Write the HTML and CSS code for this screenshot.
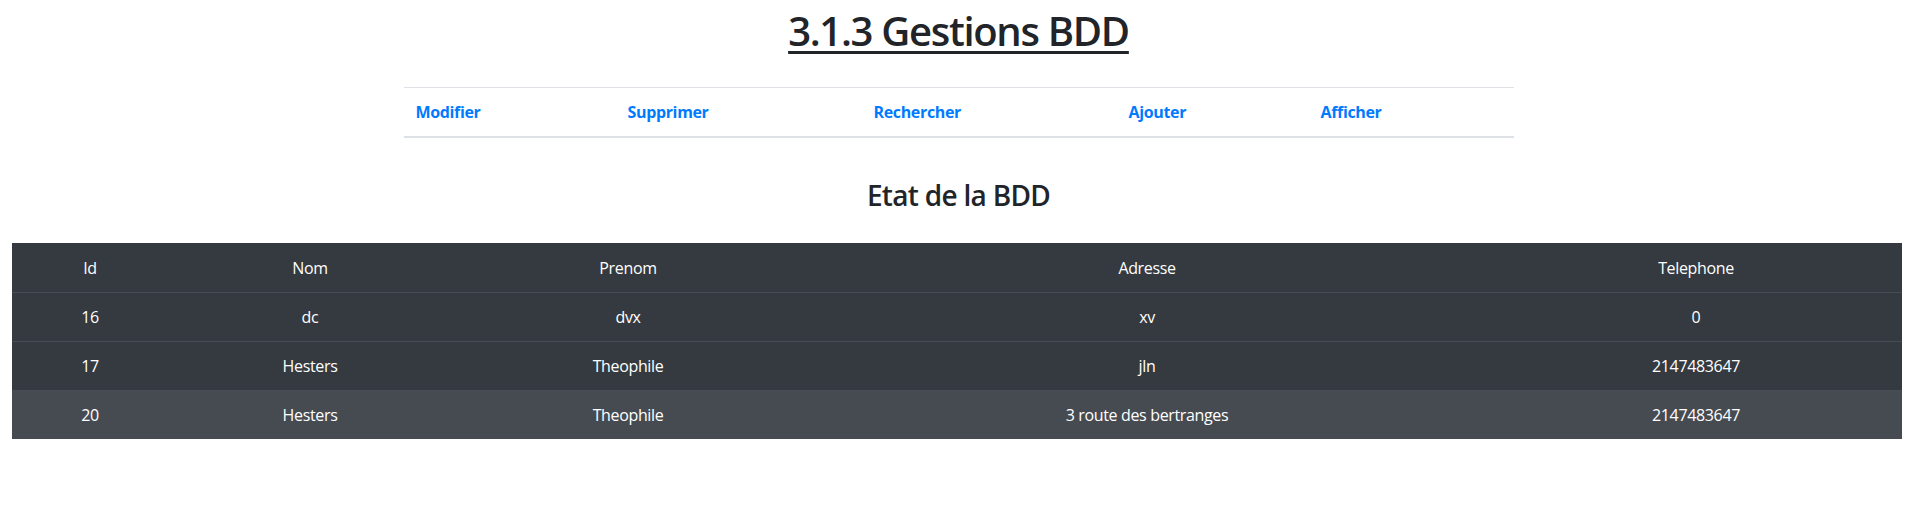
FILE: index.html
```html
<!DOCTYPE html>
<html lang="fr">
<head>
<meta charset="utf-8">
<title>3.1.3 Gestions BDD</title>
<link rel="stylesheet" href="styles.css">
</head>
<body>
<header class="page-header">
  <h1 class="page-title">3.1.3 Gestions BDD</h1>
</header>
<nav class="nav-wrap">
  <table class="nav-table">
    <colgroup>
      <col class="nc1"><col class="nc2"><col class="nc3"><col class="nc4"><col class="nc5">
    </colgroup>
    <thead>
      <tr>
        <th><a href="#">Modifier</a></th>
        <th><a href="#">Supprimer</a></th>
        <th><a href="#">Rechercher</a></th>
        <th><a href="#">Ajouter</a></th>
        <th><a href="#">Afficher</a></th>
      </tr>
    </thead>
  </table>
</nav>
<h3 class="section-title">Etat de la BDD</h3>
<table class="data-table">
  <colgroup>
    <col class="dc1"><col class="dc2"><col class="dc3"><col class="dc4"><col class="dc5">
  </colgroup>
  <thead>
    <tr><th>Id</th><th>Nom</th><th>Prenom</th><th>Adresse</th><th>Telephone</th></tr>
  </thead>
  <tbody>
    <tr><td>16</td><td>dc</td><td>dvx</td><td>xv</td><td>0</td></tr>
    <tr><td>17</td><td>Hesters</td><td>Theophile</td><td>jln</td><td>2147483647</td></tr>
    <tr class="hover"><td>20</td><td>Hesters</td><td>Theophile</td><td>3 route des bertranges</td><td>2147483647</td></tr>
  </tbody>
</table>
</body>
</html>
```

FILE: styles.css
```css
* { box-sizing: border-box; }

html, body {
  margin: 0;
  padding: 0;
  background: #fff;
}

body {
  font-family: "Segoe UI", "Open Sans", "Noto Sans", sans-serif;
  font-size: 16px;
  line-height: 24px;
  color: #212529;
  letter-spacing: -0.35px;
}

.page-header {
  padding-top: 7px;
  text-align: center;
}

.page-title {
  margin: 0;
  font-size: 40px;
  line-height: 48px;
  font-weight: 600;
  letter-spacing: -1.3px;
  text-decoration: underline;
  text-decoration-thickness: 3px;
  text-underline-offset: 5px;
}

.nav-wrap {
  width: 1110px;
  margin: 32px auto 0;
}

.nav-table {
  width: 100%;
  border-collapse: collapse;
  table-layout: fixed;
}

.nav-table th {
  text-align: left;
  padding: 12px;
  border-top: 1px solid #dee2e6;
  border-bottom: 2px solid #dee2e6;
  font-weight: 700;
}

.nav-table a {
  color: #007bff;
  text-decoration: none;
}

.nc1 { width: 212px; }
.nc2 { width: 246px; }
.nc3 { width: 255px; }
.nc4 { width: 192px; }
.nc5 { width: 205px; }

.section-title {
  margin: 40px 0 31px;
  text-align: center;
  font-size: 28px;
  line-height: 34px;
  font-weight: 600;
  letter-spacing: -0.7px;
}

.data-table {
  width: 1890px;
  margin-left: 12px;
  border-collapse: collapse;
  table-layout: fixed;
  background: #343a40;
  color: #fff;
}

.data-table th,
.data-table td {
  padding: 12px;
  text-align: center;
  font-weight: 400;
}

.data-table th {
  border-top: 1px solid #343a40;
}

.data-table td {
  border-top: 1px solid #454d55;
}

.data-table tr.hover {
  background: #464b52;
}

.dc1 { width: 156px; }
.dc2 { width: 284px; }
.dc3 { width: 352px; }
.dc4 { width: 686px; }
.dc5 { width: 412px; }
```
